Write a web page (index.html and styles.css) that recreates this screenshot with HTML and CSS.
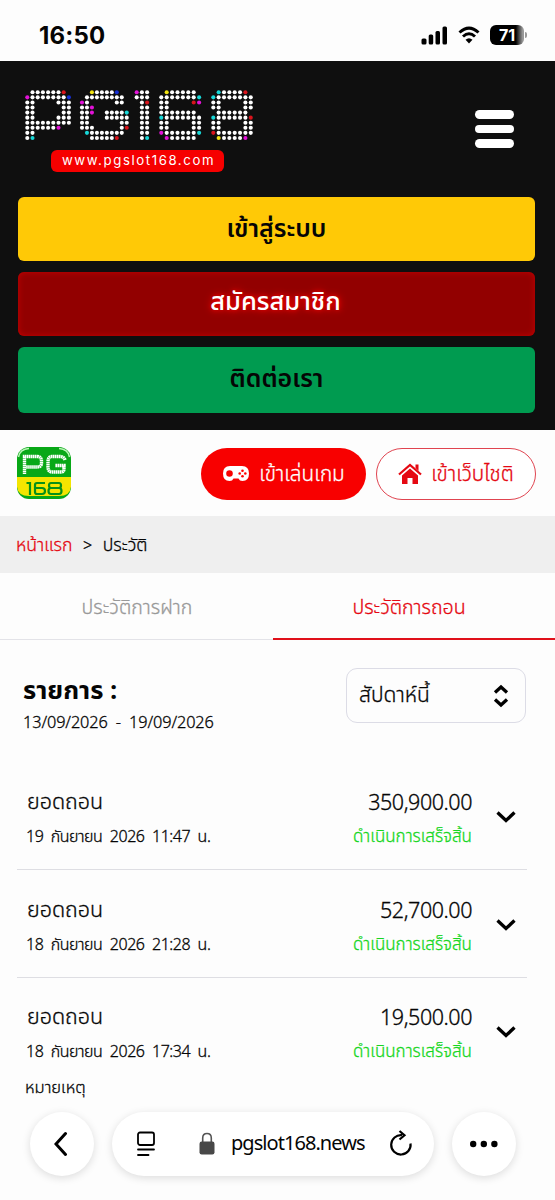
FILE: index.html
```html
<!DOCTYPE html>
<html lang="th">
<head>
<meta charset="utf-8">
<meta name="viewport" content="width=device-width, initial-scale=1">
<title>PG168</title>
<link rel="stylesheet" href="styles.css">
</head>
<body>
<div class="status">
  <span class="clock">16:50</span>
  <div class="status-icons">
    <svg width="28" height="20" viewBox="0 0 28 20"><rect x="0.500" y="13.500" width="5" height="6" rx="1.500"/><rect x="7.700" y="9.500" width="4.500" height="10" rx="1.500"/><rect x="14.500" y="6" width="4.500" height="13.500" rx="1.500"/><rect x="21.500" y="1.500" width="4.500" height="18" rx="1.500"/></svg>
    <svg width="22" height="18" viewBox="0 0 22 18"><path d="M1.500 6.500Q11-2.300 20.500 6.500M5 10.500Q11 5 17 10.500" fill="none" stroke="#000" stroke-width="3"/><path d="M11 17.500L7.500 13.800Q11 10.800 14.500 13.800Z"/></svg>
    <span class="battery-wrap"><span class="battery"><b>71</b></span><i></i></span>
  </div>
</div>

<header class="hero">
  <div class="hero-top">
    <div class="brand">
      <svg class="dots" id="dots" width="236" height="54" viewBox="0 0 236 54"></svg>
      <span class="brand-url">www.pgslot168.com</span>
    </div>
    <div class="burger"><i></i><i></i><i></i></div>
  </div>
  <nav class="actions">
    <a class="act act-login"><span>เข้าสู่ระบบ</span></a>
    <a class="act act-join"><span>สมัครสมาชิก</span></a>
    <a class="act act-contact"><span>ติดต่อเรา</span></a>
  </nav>
</header>

<section class="bar">
  <svg class="app-logo" width="55" height="53" viewBox="0 0 55 53">
    <defs><clipPath id="tile"><rect width="54" height="52" rx="12"/></clipPath></defs>
    <g clip-path="url(#tile)">
      <rect width="54" height="52" fill="#08a817"/>
      <path d="M0 30H54V40Q53 49 42 49H12Q1 49 0 40Z" fill="#f4e500"/>
      <path d="M1.500 10Q3 2 12 1.500M52.500 10Q51 2 42 1.500" fill="none" stroke="#b9f5b5" stroke-width="1.500"/>
    </g>
    <g fill="none" stroke="#fff" stroke-width="3.400" stroke-dasharray="1.600 .4"><path d="M7.500 27V9.500H20Q24.500 9.500 24.500 14V16Q24.500 20 20 20H9"/><path d="M48 13Q47 9.500 43 9.500H35Q31 9.500 31 15V20Q31 25 35 25H44Q47 25 47 22V18.500H38"/></g>
    <g fill="none" stroke="#079017" stroke-width="2.200"><path d="M9.500 36H13V48"/><path d="M28 36H20Q18 36 18 38V45Q18 47 20 47H25Q28 47 28 44Q28 41 25 41H18"/><path d="M34 36H42Q44 36 44 38.500Q44 41 42 41H34Q32 41 32 38.500Q32 36 34 36M34 41Q31.500 41 31.500 44Q31.500 47 34 47H42Q44.500 47 44.500 44Q44.500 41 42 41"/></g>
  </svg>
  <div class="bar-links">
    <a class="pill pill-play">
      <svg width="28" height="17" viewBox="0 0 28 17"><path fill="#fff" fill-rule="evenodd" d="M8 1H20Q27 1 27 8.500Q27 16 20.500 16Q17.500 16 16.500 13.500H11.500Q10.500 16 7.500 16Q1 16 1 8.500Q1 1 8 1ZM7.500 5.200A3.300 3.300 0 1 0 7.500 11.800A3.300 3.300 0 1 0 7.500 5.200Z"/><g fill="#f00"><circle cx="20.500" cy="5.700" r="1.300"/><circle cx="20.500" cy="11.300" r="1.300"/><circle cx="17.700" cy="8.500" r="1.300"/><circle cx="23.300" cy="8.500" r="1.300"/></g></svg>
      <span>เข้าเล่นเกม</span>
    </a>
    <a class="pill pill-site">
      <svg width="24" height="22" viewBox="0 0 24 22"><g fill="#e50812"><path d="M4 12.500L12 5.500L20 12.500V21H14.500V15H9.500V21H4Z"/><path d="M17.500 1.500H20.500V8L17.500 5Z"/></g><path d="M1 11.500L12 2L23 11.500" fill="none" stroke="#e50812" stroke-width="2.200"/></svg>
      <span>เข้าเว็บไชติ</span>
    </a>
  </div>
</section>

<div class="crumbs"><a><span>หน้าแรก</span></a><i>&gt;</i><span>ประวัติ</span></div>

<div class="tabs">
  <div class="tab"><span>ประวัติการฝาก</span></div>
  <div class="tab tab-on"><span>ประวัติการถอน</span></div>
</div>

<div class="filter">
  <div class="range">
    <h1><span>รายการ :</span></h1>
    <p>13/09/2026 - 19/09/2026</p>
  </div>
  <div class="select"><span>สัปดาห์นี้</span>
    <svg width="16" height="24" viewBox="0 0 16 24"><path d="M2 8.500L8 3L14 8.500M2 15.500L8 21L14 15.500" fill="none" stroke="#000" stroke-width="3.300"/></svg>
  </div>
</div>

<ul class="list">
  <li class="row">
    <div class="row-main"><strong><span>ยอดถอน</span></strong><small>19 กันยายน 2026 11:47 น.</small></div>
    <div class="row-sum"><b>350,900.00</b><em><span>ดำเนินการเสร็จสิ้น</span></em></div>
    <svg class="chev" width="20" height="14" viewBox="0 0 20 14"><path d="M1.500 2.500L10 10.500L18.500 2.500" fill="none" stroke="#000" stroke-width="3.300"/></svg>
  </li>
  <li class="row">
    <div class="row-main"><strong><span>ยอดถอน</span></strong><small>18 กันยายน 2026 21:28 น.</small></div>
    <div class="row-sum"><b>52,700.00</b><em><span>ดำเนินการเสร็จสิ้น</span></em></div>
    <svg class="chev" width="20" height="14" viewBox="0 0 20 14"><path d="M1.500 2.500L10 10.500L18.500 2.500" fill="none" stroke="#000" stroke-width="3.300"/></svg>
  </li>
  <li class="row row-last">
    <div class="row-main"><strong><span>ยอดถอน</span></strong><small>18 กันยายน 2026 17:34 น.</small></div>
    <div class="row-sum"><b>19,500.00</b><em><span>ดำเนินการเสร็จสิ้น</span></em></div>
    <svg class="chev" width="20" height="14" viewBox="0 0 20 14"><path d="M1.500 2.500L10 10.500L18.500 2.500" fill="none" stroke="#000" stroke-width="3.300"/></svg>
  </li>
</ul>
<p class="note"><span>หมายเหตุ</span></p>

<footer class="browser">
  <a class="round"><svg width="16" height="28" viewBox="0 0 16 28"><path d="M11.500 3.500L2 14L11.500 24.500" fill="none" stroke="#000" stroke-width="3" stroke-linecap="round"/></svg></a>
  <div class="address">
    <svg width="20" height="26" viewBox="0 0 20 26"><g fill="none" stroke="#000" stroke-width="1.800" stroke-linecap="round"><rect x="2" y="1.500" width="16" height="12.500" rx="2"/><path d="M2 18.500H18M2 24H12.500"/></g></svg>
    <svg class="lock" width="16" height="24" viewBox="0 0 16 24"><path d="M3.700 11V6Q3.700 1.500 8 1.500Q12.300 1.500 12.300 6V11" fill="none" stroke="#555" stroke-width="1.600"/><rect x="0.500" y="9.500" width="15" height="13" rx="2.200" fill="#484848"/></svg>
    <span class="url">pgslot168.news</span>
    <svg class="reload" width="24" height="28" viewBox="0 0 24 28"><path d="M21.500 13.500A9.700 9.700 0 1 1 13 5.200" fill="none" stroke="#000" stroke-width="2.200"/><path d="M10.500 1L15.500 5.300L10.500 9.500" fill="none" stroke="#000" stroke-width="2.200"/></svg>
  </div>
  <a class="round"><svg width="28" height="8" viewBox="0 0 28 8"><circle cx="3.200" cy="4" r="3.200"/><circle cx="13.800" cy="4" r="3.200"/><circle cx="24.400" cy="4" r="3.200"/></svg></a>
</footer>
<script src="dots.js"></script>
</body>
</html>
```

FILE: styles.css
```css
* { box-sizing: border-box; }
body {
  margin: 0;
  width: 555px;
  height: 1200px;
  overflow: hidden;
  background: #fdfdfd;
  color: #050505;
  font-family: "Noto Sans Thai", "Noto Sans", sans-serif;
  font-size: 17px;
  font-weight: 300;
}
svg { display: block; flex: none; }
.bar, .crumbs, .tabs, .range p, .select, .list, .note { -webkit-text-stroke: .3px currentColor; }
.status { height: 61px; display: flex; justify-content: space-between; padding: 23px 28px 0 39px; }
.clock { font: 700 24px/26px Inter, sans-serif; letter-spacing: .2px; }
.status-icons { display: flex; align-items: center; gap: 9px; height: 23px; }
.battery-wrap { display: flex; align-items: center; gap: 1px; margin-left: 1px; }
.battery-wrap i { width: 2px; height: 6px; border-radius: 0 2px 2px 0; background: #999; }
.battery { width: 34px; height: 20px; border-radius: 6px; background: linear-gradient(90deg, #000 76%, #999 96%); color: #fff; display: flex; justify-content: center; align-items: center; }
.battery b { font: 700 16px/20px Inter, sans-serif; }

.hero { height: 369px; background: #0f0f0f; padding: 28px 20px 0 18px; }
.hero-top { height: 108px; display: flex; justify-content: space-between; }
.brand { width: 240px; padding-left: 5px; display: flex; flex-direction: column; }
.brand-url { margin: 7px 0 0 28px; width: 173px; height: 22px; border-radius: 6px; background: #f60000; color: #fff; font: 400 13.200px/21px Inter, sans-serif; letter-spacing: 1.600px; text-indent: 2px; text-align: center; white-space: nowrap; }
.burger { width: 39px; margin: 21px 21px 0 0; display: flex; flex-direction: column; gap: 6px; }
.burger i { height: 8.500px; border-radius: 5px; background: #fff; }
.actions { display: flex; flex-direction: column; gap: 11px; }
.act { height: 64px; border-radius: 6px; display: flex; justify-content: center; align-items: center; font-size: 25px; font-weight: 600; }
.act-login { background: #ffc906; }
.act-join { background: #920000; color: #fff; box-shadow: inset 0 0 6px #c40000; text-shadow: 0 0 9px #f00, 0 0 4px #d00; font-weight: 500; font-size: 25.500px; padding: 0 2px 4px 0; }
.act-contact { height: 66px; background: #009b50; padding-bottom: 2px; }

.bar { height: 86px; display: flex; justify-content: space-between; align-items: center; padding: 1px 19px 0 17px; }
.bar-links { display: flex; gap: 10px; }
.pill { height: 52px; border-radius: 26px; display: flex; align-items: center; justify-content: center; gap: 9px; font-size: 20.700px; }
.pill span { padding-top: 2px; }
.pill-play { width: 165px; background: #f80000; color: #fff; }
.pill-site { width: 160px; border: 1px solid #e04450; color: #e50812; background: #fff; }

.crumbs { height: 57px; background: #efefef; display: flex; align-items: center; gap: 10.500px; padding: 2px 16px 0; font-size: 17.700px; }
.crumbs a { color: #e50812; }
.crumbs i { font-style: normal; font-size: 16px; }

.tabs { height: 67px; display: flex; }
.tab { width: 273px; display: flex; align-items: center; justify-content: center; border-bottom: 1px solid #e3e3e8; color: #999; font-size: 19.600px; padding: 3px 0 0 1px; }
.tab-on { width: 282px; border-bottom: 2px solid #e0101a; color: #e50812; padding: 4px 10px 0 0; }

.filter { height: 120px; display: flex; justify-content: space-between; padding: 28px 29px 0 23px; }
.range { padding-top: 6px; }
.range h1 { margin: 0; font-size: 25.500px; line-height: 34px; font-weight: 700; }
.range p { margin: 3px 0 0; font-size: 16.300px; line-height: 24px; word-spacing: 4px; letter-spacing: -.1px; }
.select { width: 180px; height: 55px; border: 1px solid #dcdce6; border-radius: 11px; display: flex; align-items: center; justify-content: space-between; padding: 0 16px 0 12px; font-size: 21px; }

.list { list-style: none; margin: 0; padding: 0 28px 0 17px; }
.row { height: 108px; display: flex; padding: 26px 11px 0 10px; border-bottom: 1px solid #dedee3; }
.row:first-child { height: 110px; padding-top: 28px; }
.row-last { height: 98px; border: 0; padding-top: 25px; }
.row-main, .row-sum { display: flex; flex-direction: column; }
.row-main { flex: 1; }
.row-sum { align-items: flex-end; margin-right: 24px; }
.row strong { font-size: 21.500px; line-height: 30px; font-weight: inherit; }
.row b { font-size: 21.500px; line-height: 32px; font-weight: inherit; letter-spacing: -.45px; }
.row small { font-size: 16px; line-height: 24px; margin-top: 7px; margin-left: -1px; word-spacing: 3.700px; letter-spacing: -.45px; }
.row em { font-style: normal; color: #16d622; font-size: 17px; line-height: 24px; margin-top: 5px; }
.chev { margin-top: 22px; }
.note { margin: 0; height: 24px; padding-left: 25px; font-size: 16.500px; line-height: 24px; }

.browser { display: flex; padding: 12px 39px 0 30px; justify-content: space-between; }
.round { width: 64px; height: 64px; border-radius: 50%; background: #fff; box-shadow: 0 2px 8px #0002; display: flex; align-items: center; justify-content: center; }
.address { width: 322px; height: 64px; border-radius: 32px; background: #fff; box-shadow: 0 2px 8px #0002; display: flex; align-items: center; padding: 0 21px 0 24px; }
.lock { margin-left: 43px; }
.url { margin-left: 16px; flex: 1; font-size: 20px; font-weight: 400; letter-spacing: -.95px; }
```

FILE: dots.js
```js
// Dot-matrix wordmark: one letter per colour, "." is an unlit dot.
const colours = { w: "#fff", r: "#d9141c", b: "#1730d8", m: "#e312d8", c: "#18d8d8", y: "#f2e410" };
const glyphs = [
  { x: 4.3, step: 5.2, rows: [".wwwwwwr.", "mwwwwwwwb", "ww....www", "ww.....ww", "ww.....ww", "ww....www", "wwwwwwwww", "wwwwwwm..", "ww.......", "wc......."] },
  { x: 59, step: 4.97, rows: ["..ywwwwb..", ".wwwwwwww.", "mw.....ww.", "wwm.......", "wwm..wwwwc", "ww...wwwww", "ww......ww", "www.....wr", ".cwwwwwww.", "..wwwwwr.."] },
  { x: 113.7, step: 5.2, rows: ["mww", "www", ".wr", ".ww", ".ww", ".ww", ".ww", ".ww", ".ww", ".wc"] },
  { x: 138.3, step: 5.4, rows: [".ywwwww.", "wwwwwwwc", "ww....rm", "ww......", "wwwwwww.", "cwwwwwww", "ww....ww", "ww....ww", "mwwwwwwc", ".mwwwww."] },
  { x: 190.3, step: 5.35, rows: [".cwwwwr.", "cwwwwwww", "ww....ww", "ww....ww", ".wwwwww.", "cwwwwwwr", "ww....ww", "ww....ww", "rwwwwwww", ".ywwwwm."] }
];
const board = document.getElementById("dots");
for (const glyph of glyphs) {
  glyph.rows.forEach((row, r) => [...row].forEach((dot, c) => {
    if (dot === ".") return;
    const circle = document.createElementNS("http://www.w3.org/2000/svg", "circle");
    circle.setAttribute("cx", glyph.x + c * glyph.step);
    circle.setAttribute("cy", 3.3 + r * 5.07);
    circle.setAttribute("r", 2.05);
    circle.setAttribute("fill", colours[dot]);
    board.appendChild(circle);
  }));
}
```
